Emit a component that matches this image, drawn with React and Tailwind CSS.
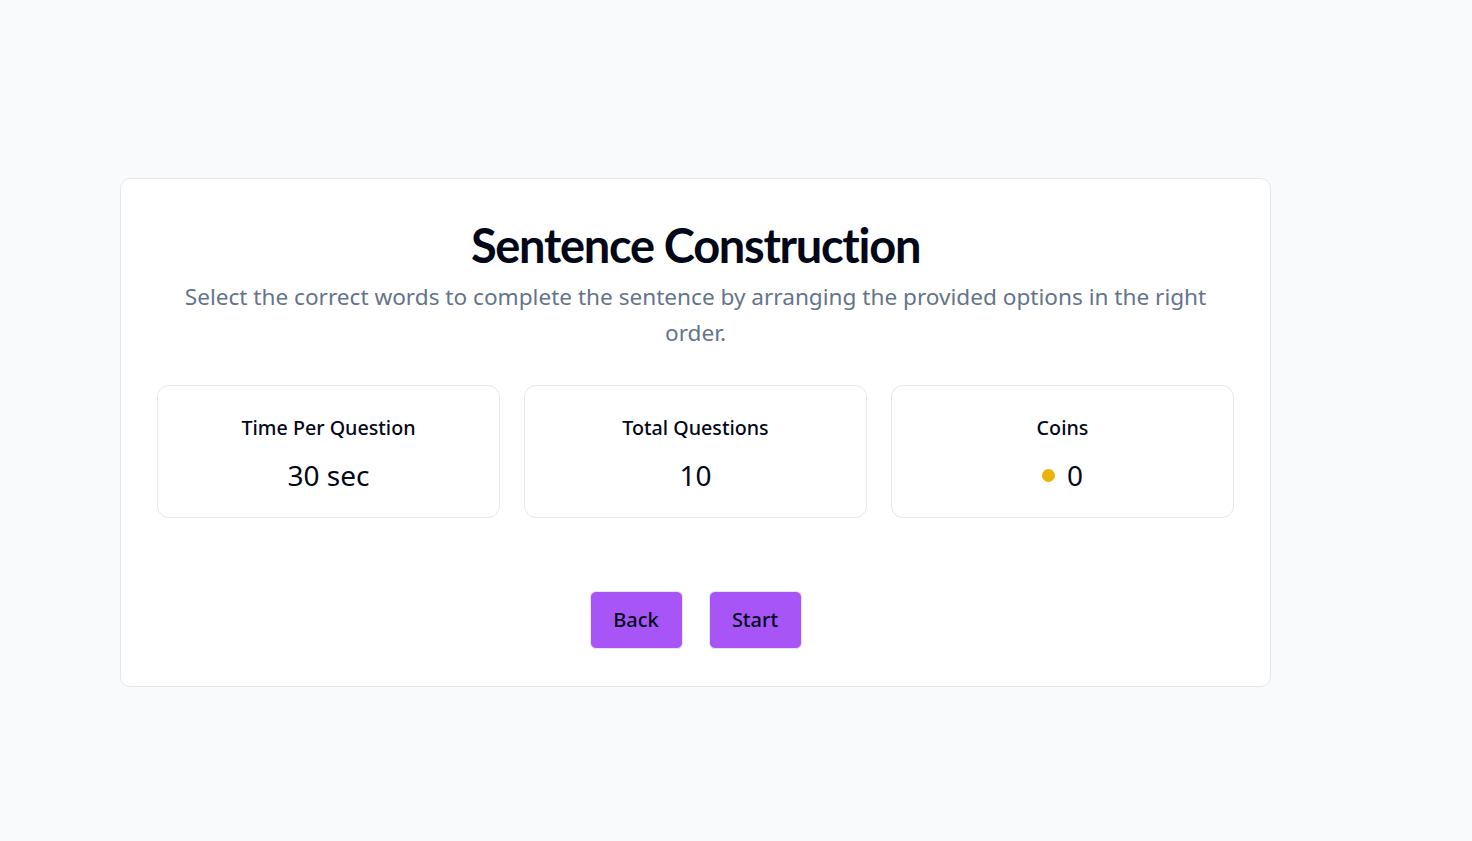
import React from 'react';

const stats = [
  { label: 'Time Per Question', value: '30 sec' },
  { label: 'Total Questions', value: '10' },
  { label: 'Coins', value: '0', coin: true },
];

const App = () => {
  return (
    <div className="min-h-[841px] bg-[#f9fafb] pl-[120px] pt-[178px] font-['Noto_Sans',sans-serif]">
      <div className="w-[1151px] rounded-[10px] border border-[#e5e7eb] bg-white px-9 pt-[40px] pb-[37px]">
        <h1 className="text-center font-['Lato',sans-serif] text-[47px] font-bold leading-[52px] tracking-[-1.3px] text-[#020817]">Sentence Construction</h1>
        <p className="mt-[8px] text-center text-[22.6px] leading-[36px] text-[#64748b]">
          Select the correct words to complete the sentence by arranging the provided options in the right order.
        </p>
        <div className="mt-[34px] grid grid-cols-3 gap-6">
          {stats.map((s) => (
            <div key={s.label} className="flex h-[133px] flex-col items-center rounded-xl border border-[#e2e8f0] pt-[28px]">
              <div className="text-[19.7px] font-medium leading-[28px] text-[#020817]">{s.label}</div>
              <div className="mt-[15px] flex items-center gap-3 text-[28px] leading-[36px] text-[#020817]">
                {s.coin && <span className="inline-block h-[13px] w-[13px] rounded-full bg-[#eab308]" />}
                {s.value}
              </div>
            </div>
          ))}
        </div>
        <div className="mt-[73px] flex justify-center gap-[26px]">
          <button className="h-[58px] w-[93px] rounded-md border border-[#e2e8f0] bg-[#a855f7] text-[20px] font-medium text-[#020817]">Back</button>
          <button className="h-[58px] w-[93px] rounded-md border border-[#e2e8f0] bg-[#a855f7] text-[20px] font-medium text-[#020817]">Start</button>
        </div>
      </div>
    </div>
  );
};

export default App;
